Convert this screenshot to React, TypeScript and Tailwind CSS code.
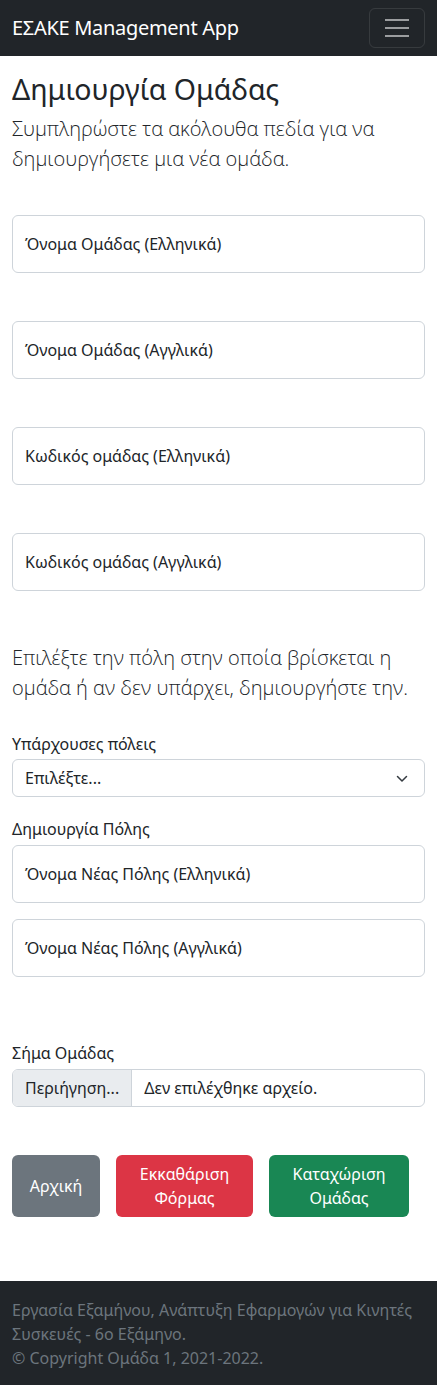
import React from 'react';

const font = { fontFamily: '"Noto Sans", "Open Sans", sans-serif' };
const light = { fontFamily: '"Open Sans", "Noto Sans", sans-serif' };

const FloatingField: React.FC<{ label: string }> = ({ label }) => (
  <div className="h-[58px] w-full rounded-md border border-[#ced4da] bg-white flex items-center px-3 text-base text-[#212529]">
    {label}
  </div>
);

const App: React.FC = () => {
  return (
    <div className="min-h-[1385px] bg-white flex flex-col text-[#212529]" style={font}>
      <nav className="h-14 bg-[#212529] flex items-center justify-between px-3">
        <span className="text-xl text-white tracking-[-0.3px]">ΕΣΑΚΕ Management App</span>
        <button className="w-[56px] h-[40px] rounded-md border border-white/10 flex flex-col items-center justify-center gap-[6px]">
          <span className="block w-6 h-[2px] bg-white/55" />
          <span className="block w-6 h-[2px] bg-white/55" />
          <span className="block w-6 h-[2px] bg-white/55" />
        </button>
      </nav>

      <main className="px-3 pt-4 flex-1">
        <h1 className="text-[28.5px] leading-[1.2] font-normal mb-2">Δημιουργία Ομάδας</h1>
        <p className="text-xl font-light leading-[1.5]" style={light}>
          Συμπληρώστε τα ακόλουθα πεδία για να δημιουργήσετε μια νέα ομάδα.
        </p>

        <div className="mt-[41px] flex flex-col gap-[48px]">
          <FloatingField label="Όνομα Ομάδας (Ελληνικά)" />
          <FloatingField label="Όνομα Ομάδας (Αγγλικά)" />
          <FloatingField label="Κωδικός ομάδας (Ελληνικά)" />
          <FloatingField label="Κωδικός ομάδας (Αγγλικά)" />
        </div>

        <p className="mt-[52px] text-xl font-light leading-[1.5]" style={light}>
          Επιλέξτε την πόλη στην οποία βρίσκεται η ομάδα ή αν δεν υπάρχει, δημιουργήστε την.
        </p>

        <label className="block mt-[29px] mb-[3px] text-base leading-6">Υπάρχουσες πόλεις</label>
        <div className="h-[38px] rounded-md border border-[#ced4da] flex items-center justify-between pl-3 pr-[16px] text-base">
          <span>Επιλέξτε...</span>
          <svg width="12" height="10" viewBox="0 0 16 12" fill="none" stroke="#343a40" strokeWidth="2" strokeLinecap="round" strokeLinejoin="round">
            <path d="M2 4l6 6 6-6" />
          </svg>
        </div>

        <label className="block mt-[20px] mb-[4px] text-base leading-6">Δημιουργία Πόλης</label>
        <div className="flex flex-col gap-4">
          <FloatingField label="Όνομα Νέας Πόλης (Ελληνικά)" />
          <FloatingField label="Όνομα Νέας Πόλης (Αγγλικά)" />
        </div>

        <label className="block mt-[64px] mb-[4px] text-base leading-6">Σήμα Ομάδας</label>
        <div className="h-[38px] rounded-md border border-[#ced4da] flex items-stretch overflow-hidden text-base">
          <span className="bg-[#e9ecef] border-r border-[#ced4da] px-3 flex items-center">Περιήγηση...</span>
          <span className="px-3 flex items-center">Δεν επιλέχθηκε αρχείο.</span>
        </div>

        <div className="mt-[48px] flex gap-4 items-start">
          <button className="w-[88px] h-[62px] rounded-md bg-[#6c757d] text-white text-base leading-6">Αρχική</button>
          <button className="w-[137px] h-[62px] rounded-md bg-[#dc3545] text-white text-base leading-6">
            Εκκαθάριση<br />Φόρμας
          </button>
          <button className="w-[140px] h-[62px] rounded-md bg-[#198754] text-white text-base leading-6">
            Καταχώριση<br />Ομάδας
          </button>
        </div>
      </main>

      <footer className="bg-[#212529] h-[104px] px-3 pt-[17px] text-base leading-6 text-[#6c757d]">
        <p>Εργασία Εξαμήνου, Ανάπτυξη Εφαρμογών για Κινητές Συσκευές - 6ο Εξάμηνο.</p>
        <p>© Copyright Ομάδα 1, 2021-2022.</p>
      </footer>
    </div>
  );
};

export default App;
